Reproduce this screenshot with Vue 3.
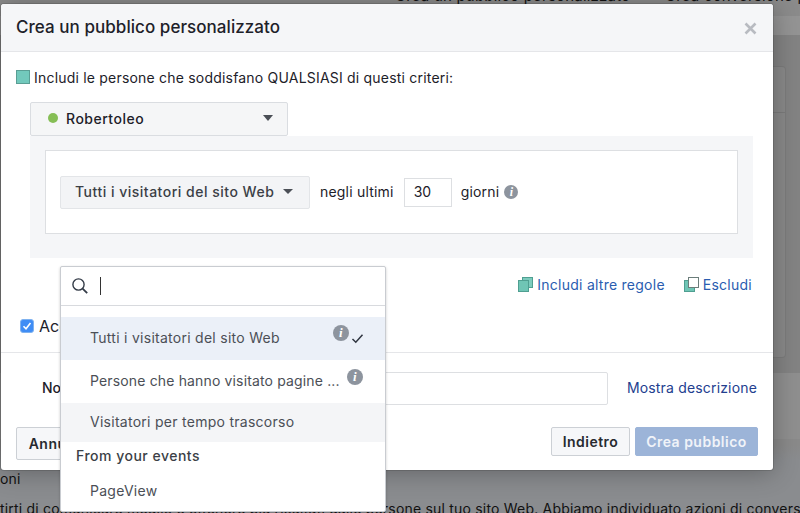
<script setup>
const options = [
  { label: 'Tutti i visitatori del sito Web', cls: 'selected', info: 'info-a', check: true },
  { label: 'Persone che hanno visitato pagine ...', cls: 'plain', info: 'info-b', check: false },
  { label: 'Visitatori per tempo trascorso', cls: 'hovered', info: '', check: false },
]
</script>

<template>
  <div class="page">
    <div class="backdrop">
      <span class="bg-top bg-top-a">Crea un pubblico personalizzato</span>
      <span class="bg-top bg-top-b">Crea conversione personalizzata</span>
      <div class="bg-card"><i></i></div>
      <span class="bg-low bg-low-a">oni</span>
      <span class="bg-low bg-low-b">tirti di comunicare meglio e ottenere più risultati dalle persone sul tuo sito Web. Abbiamo individuato azioni di conversione</span>
    </div>

    <section class="dialog">
      <header class="dialog-head">
        <h1>Crea un pubblico personalizzato</h1>
        <svg class="close" width="13" height="13" viewBox="0 0 13 13"><path d="M1.5 1.5 11.5 11.5M11.5 1.5 1.5 11.5" stroke="#b8bbc1" stroke-width="2.6"/></svg>
      </header>

      <div class="dialog-body">
        <div class="criteria"><i class="swatch"></i><span>Includi le persone che soddisfano QUALSIASI di questi criteri:</span></div>
        <div class="pixel"><i class="dot"></i><b>Robertoleo</b><i class="caret big"></i></div>
        <div class="rule-wrap">
          <div class="rule">
            <div class="rule-select"><span>Tutti i visitatori del sito Web</span><i class="caret"></i></div>
            <span class="rule-text first">negli ultimi</span>
            <div class="days">30</div>
            <span class="rule-text">giorni</span>
            <i class="info">i</i>
          </div>
        </div>
        <div class="links">
          <a><svg width="15" height="15" viewBox="0 0 15 15"><rect x="4.5" y=".5" width="10" height="10" fill="#7ccbbd" stroke="#4f9f91"/><rect x=".5" y="3.5" width="10" height="11" fill="#6fc5b5" stroke="#4f9f91"/></svg>Includi altre regole</a>
          <a><svg width="15" height="15" viewBox="0 0 15 15"><rect x=".5" y="3.5" width="10" height="11" fill="#6fc5b5" stroke="#4f9f91"/><rect x="4.5" y=".5" width="10" height="10" fill="#fff" stroke="#6b7d7a"/></svg>Escludi</a>
        </div>
        <label class="consent"><i class="tick"><svg width="10" height="10" viewBox="0 0 10 10"><path d="M1.5 5.2 4 7.8 8.5 2" fill="none" stroke="#fff" stroke-width="1.6"/></svg></i>Accetto</label>
      </div>

      <div class="name-row">
        <b class="name-label">Nome</b>
        <div class="name-input"></div>
        <a class="show-desc">Mostra descrizione</a>
      </div>

      <footer class="dialog-foot">
        <button class="btn tall">Annulla</button>
        <span class="foot-gap"></span>
        <button class="btn back">Indietro</button>
        <button class="btn primary">Crea pubblico</button>
      </footer>
    </section>

    <div class="menu">
      <div class="search">
        <svg width="18" height="18" viewBox="0 0 18 18"><circle cx="7.5" cy="7.5" r="5.6" fill="none" stroke="#333b47" stroke-width="1.4"/><path d="m11.6 11.6 4.6 4.6" stroke="#333b47" stroke-width="1.8"/></svg>
        <i class="cursor"></i>
      </div>
      <div class="list">
        <div v-for="o in options" :key="o.label" class="opt" :class="o.cls">
          <span>{{ o.label }}</span>
          <i v-if="o.info" class="info" :class="o.info">i</i>
          <svg v-if="o.check" class="check" width="13" height="11" viewBox="0 0 13 11"><path d="M1.5 6 4.8 9.2 11.5 1.8" fill="none" stroke="#2f3540" stroke-width="1.5"/></svg>
        </div>
        <div class="group">From your events</div>
        <div class="opt event"><span>PageView</span></div>
      </div>
    </div>
  </div>
</template>

<style>
html, body { margin: 0; background: #8b8d90; overflow: hidden; }
</style>

<style scoped>
.page { position: relative; width: 800px; height: 513px; overflow: hidden; background: #8c8e91; font-family: Inter, "Liberation Sans", Arial, sans-serif; color: #1d2129; }
.backdrop { position: absolute; inset: 0; background: linear-gradient(#8b8b8b 0 16px, #949494 16px 35px, #838383 35px 373px, #8f8f8f 373px 439px, #8a8a8a 439px 445px, #8a8c8f 460px); }
.bg-top, .bg-low { position: absolute; white-space: nowrap; font-size: 14px; color: #111; letter-spacing: .2px; }
.bg-top { top: -14px; font-size: 15px; }
.bg-top-a { left: 395px; }
.bg-top-b { left: 665px; }
.bg-low-a { left: 0; top: 470px; }
.bg-low-b { left: 0; top: 500px; }
.bg-card { position: absolute; left: 772px; top: 66px; width: 13px; height: 290px; border: 1px solid #7c7c7c; border-left: 0; border-radius: 0 4px 4px 0; background: #8a8a8a; }
.bg-card i { display: block; margin-top: 45px; border-top: 1px solid #7c7c7c; }

.dialog { position: absolute; left: 1px; top: 4px; width: 772px; height: 466px; background: #fff; border-radius: 3px; box-shadow: 0 2px 26px rgba(0,0,0,.3), 0 0 0 1px rgba(0,0,0,.12); display: flex; flex-direction: column; }
.dialog-head { height: 48px; box-sizing: border-box; background: #f5f6f8; border-bottom: 1px solid #e5e6e9; border-radius: 3px 3px 0 0; display: flex; align-items: center; justify-content: space-between; padding: 0 15px 1px; flex: none; }
h1 { margin: 0; font-size: 17px; font-weight: 500; letter-spacing: .05px; color: #1d2129; }
.close { margin: 2px 1px 0 0; }
.dialog-body { flex: none; height: 301px; padding: 17px 21px 0 15px; box-sizing: border-box; border-bottom: 1px solid #e5e6e9; }
.criteria { display: flex; align-items: center; gap: 4px; font-size: 14px; line-height: 18px; color: #1d2129; letter-spacing: .2px; }
.swatch { width: 14px; height: 14px; background: #72c9bc; border: 1px solid #5a9e94; box-sizing: border-box; margin-bottom: 2px; }
.pixel { margin: 15px 0 0 14px; width: 258px; height: 34px; box-sizing: border-box; background: #f5f6f7; border: 1px solid #dadde1; border-radius: 2px; display: flex; align-items: center; padding: 0 14px 2px 17px; }
.pixel b { font-size: 14px; font-weight: 500; flex: 1; margin-left: 8px; color: #1d2129; letter-spacing: .5px; }
.dot { width: 10px; height: 10px; border-radius: 50%; background: #86be55; }
.caret { width: 0; height: 0; border: 5px solid transparent; border-top: 5px solid #4b4f56; border-bottom: 0; }
.caret.big { border-width: 6px 5.5px 0; }
.rule-wrap { margin-left: 14px; width: 723px; height: 122px; box-sizing: border-box; background: #f5f6f8; padding: 14px 15px 0; }
.rule { height: 84px; box-sizing: border-box; background: #fff; border: 1px solid #dddfe2; display: flex; align-items: center; padding: 0 14px 0 14px; }
.rule-select { width: 250px; height: 33px; box-sizing: border-box; background: #f3f4f6; border: 1px solid #e3e5e8; border-radius: 2px; display: flex; align-items: center; padding: 0 0 1px 14px; font-weight: 500; font-size: 14px; color: #3b3f46; gap: 9px; white-space: nowrap; letter-spacing: .5px; }
.rule-text { font-size: 14px; color: #1d2129; margin-left: 9px; letter-spacing: .2px; padding-bottom: 1px; }
.rule-text.first { margin-left: 10px; }
.days { width: 48px; height: 29px; box-sizing: border-box; margin-left: 10px; border: 1px solid #dddfe2; font-size: 14px; line-height: 26px; padding-left: 9px; }
.info { width: 14px; height: 14px; border-radius: 50%; background: #8d949e; color: #fff; font: italic 700 12px/14px "Liberation Serif", serif; text-align: center; margin-left: 5px; flex: none; }
.links { margin-top: 18px; display: flex; justify-content: flex-end; gap: 19px; font-size: 14px; color: #2a5db0; letter-spacing: .25px; }
.links a { display: flex; align-items: center; gap: 4px; }
.consent { margin: 23px 0 0 4px; display: flex; align-items: center; gap: 5px; font-size: 16px; color: #1d2129; }
.tick { width: 14px; height: 14px; border-radius: 3px; background: #3f8df5; display: flex; align-items: center; justify-content: center; border: 1px solid #7fb2f0; box-sizing: border-box; }
.name-row { height: 70px; flex: none; display: flex; align-items: center; padding: 0 16px 0 41px; box-sizing: border-box; }
.name-label { font-size: 14px; font-weight: 500; flex: 1; padding-bottom: 2px; }
.name-input { width: 266px; height: 33px; box-sizing: border-box; border: 1px solid #dddfe2; border-radius: 2px; }
.show-desc { margin-left: 19px; font-size: 14px; color: #23408f; white-space: nowrap; letter-spacing: .17px; padding-bottom: 2px; }
.dialog-foot { display: flex; align-items: flex-start; gap: 5px; padding: 4px 15px 0; }
.foot-gap { flex: 1; }
.btn { height: 29px; border: 1px solid #ccd0d5; border-radius: 2px; background: #f6f7f9; font: 600 14px Inter, "Liberation Sans", Arial, sans-serif; color: #272a30; padding: 0; letter-spacing: .48px; }
.tall { height: 33px; width: 80px; }
.back { width: 79px; }
.primary { background: #9cb4d8; border-color: #9cb4d8; color: #f0f3f8; width: 123px; }

.menu { position: absolute; left: 60px; top: 266px; width: 326px; height: 246px; box-sizing: border-box; background: #fff; border: 1px solid #c9ccd1; border-radius: 2px; box-shadow: 0 1px 3px rgba(0,0,0,.2); }
.search { height: 38px; border-bottom: 1px solid #d8dade; display: flex; align-items: center; padding-left: 10px; gap: 11px; }
.cursor { width: 1px; height: 18px; background: #333; }
.list { padding-top: 11px; }
.opt { display: flex; align-items: center; padding: 0 0 2px 29px; box-sizing: border-box; font-size: 14px; color: #4b4f56; position: relative; letter-spacing: .27px; }
.selected { height: 43px; background: #ebf0f8; }
.plain { height: 43px; letter-spacing: .15px; }
.hovered { height: 39px; background: #f4f5f7; }
.event { height: 41px; padding-bottom: 0; }
.opt span { white-space: nowrap; }
.info-a { position: absolute; left: 272px; top: 8px; width: 16px; height: 16px; font-size: 13px; line-height: 16px; margin: 0; }
.info-b { position: absolute; left: 286px; top: 9px; width: 16px; height: 16px; font-size: 13px; line-height: 16px; margin: 0; }
.check { position: absolute; left: 290px; top: 16px; }
.group { font-size: 14px; font-weight: 500; color: #3b3f46; padding-left: 15px; height: 28px; line-height: 28px; letter-spacing: .5px; }
</style>
